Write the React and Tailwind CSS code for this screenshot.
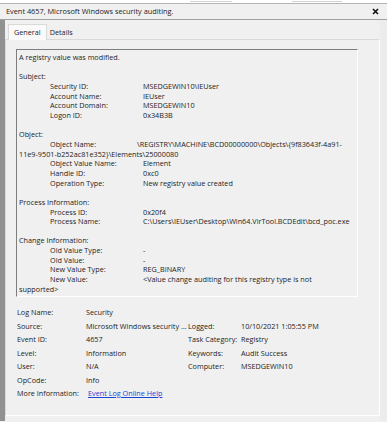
const LINES = [
  { text: 'A registry value was modified.' },
  { blank: true },
  { text: 'Subject:' },
  { label: 'Security ID:', value: 'MSEDGEWIN10\\IEUser' },
  { label: 'Account Name:', value: 'IEUser' },
  { label: 'Account Domain:', value: 'MSEDGEWIN10' },
  { label: 'Logon ID:', value: '0x34B3B' },
  { blank: true },
  { text: 'Object:' },
  { label: 'Object Name:', value: '\\REGISTRY\\MACHINE\\BCD00000000\\Objects\\{9f83643f-4a91-', near: true },
  { text: '11e9-9501-b252ac81e352}\\Elements\\25000080' },
  { label: 'Object Value Name:', value: 'Element' },
  { label: 'Handle ID:', value: '0xc0' },
  { label: 'Operation Type:', value: 'New registry value created' },
  { blank: true },
  { text: 'Process Information:' },
  { label: 'Process ID:', value: '0x20f4' },
  { label: 'Process Name:', value: 'C:\\Users\\IEUser\\Desktop\\Win64.VirTool.BCDEdit\\bcd_poc.exe' },
  { blank: true },
  { text: 'Change Information:' },
  { label: 'Old Value Type:', value: '-' },
  { label: 'Old Value:', value: '-' },
  { label: 'New Value Type:', value: 'REG_BINARY' },
  { label: 'New Value:', value: '<Value change auditing for this registry type is not' },
  { text: 'supported>' },
]

// Source is shown already clipped, as the dialog draws it
const LEFT = [
  ['Log Name:', 'Security'],
  ['Source:', 'Microsoft Windows security …'],
  ['Event ID:', '4657'],
  ['Level:', 'Information'],
  ['User:', 'N/A'],
  ['OpCode:', 'Info'],
]

const RIGHT = [
  null,
  ['Logged:', '10/10/2021 1:05:55 PM'],
  ['Task Category:', 'Registry'],
  ['Keywords:', 'Audit Success'],
  ['Computer:', 'MSEDGEWIN10'],
  null,
]

function Line({ line }) {
  if (line.blank) return <div className="h-[9.67px]" />
  if (line.text) return <div className="h-[9.67px] whitespace-nowrap">{line.text}</div>
  return (
    <div className="flex h-[9.67px] whitespace-nowrap">
      <span className={line.near ? 'w-[118px] shrink-0 pl-[31px]' : 'w-[124px] shrink-0 pl-[31px]'}>
        {line.label}
      </span>
      <span>{line.value}</span>
    </div>
  )
}

export default function App() {
  return (
    <div className="relative h-[422px] w-[387px] overflow-hidden bg-[#f0f0f0] font-['Open_Sans',sans-serif] text-[7.25px] leading-[9.67px] text-[#1c1c1c]">
      {/* list row cut off above the dialog: only the bottoms of its letters show */}
      <div className="flex h-[4px] items-start gap-[60px] border-b border-[#b4b4b4] bg-white pl-[190px]">
        <div className="mt-[1px] h-[1px] w-[42px] bg-[#d4d4d4]" />
        <div className="mt-[1px] h-[1px] w-[50px] bg-[#d4d4d4]" />
      </div>

      <div className="flex h-[16px] items-center justify-between border-b border-[#a0a0a0] pl-[6px] pr-[8px] text-[7.35px]">
        <span>Event 4657, Microsoft Windows security auditing.</span>
        <svg width="7" height="7" viewBox="0 0 7 7">
          <path d="M1 1 L6 6 M6 1 L1 6" stroke="#111" strokeWidth="1.6" />
        </svg>
      </div>

      <div className="flex h-[401px]">
        <div className="w-[5px] shrink-0 bg-[#919191]" />
        <div className="flex w-[375px] flex-col pt-[4px]">
          <div className="flex h-[15px] items-end pl-[3px]">
            <div className="relative z-10 -mb-px flex h-[16px] items-center border border-b-0 border-[#d9d9d9] bg-[#fafafa] px-[5px]">
              General
            </div>
            <div className="flex h-[13px] items-center px-[3px]">Details</div>
          </div>
          <div className="flex h-[377px] flex-col border border-[#d9d9d9] border-r-white border-b-white bg-[#f0f0f0] pl-[10px] pt-[9px]">
            <div className="h-[248px] w-[342px] border border-[#7d7d7d] border-r-white border-b-white pl-[2px] pt-[3px]">
              {LINES.map((line, i) => (
                <Line key={i} line={line} />
              ))}
            </div>

            <div className="mt-[11px] flex flex-col gap-[3.85px] pl-[1px]">
              {LEFT.map(([label, value], i) => (
                <div key={label} className="flex h-[9.67px] whitespace-nowrap">
                  <span className="w-[69px] shrink-0">{label}</span>
                  <span className="w-[99px] shrink-0">{value}</span>
                  {RIGHT[i] && (
                    <>
                      <span className="w-[56px] shrink-0 pl-[3px]">{RIGHT[i][0]}</span>
                      <span>{RIGHT[i][1]}</span>
                    </>
                  )}
                </div>
              ))}
              <div className="flex h-[9.67px] whitespace-nowrap">
                <span className="w-[71px] shrink-0">More Information:</span>
                <span className="text-[#1a45d4] underline">Event Log Online Help</span>
              </div>
            </div>
          </div>
        </div>
        <div className="w-[7px] shrink-0 bg-[#ececec]" />
      </div>
    </div>
  )
}
